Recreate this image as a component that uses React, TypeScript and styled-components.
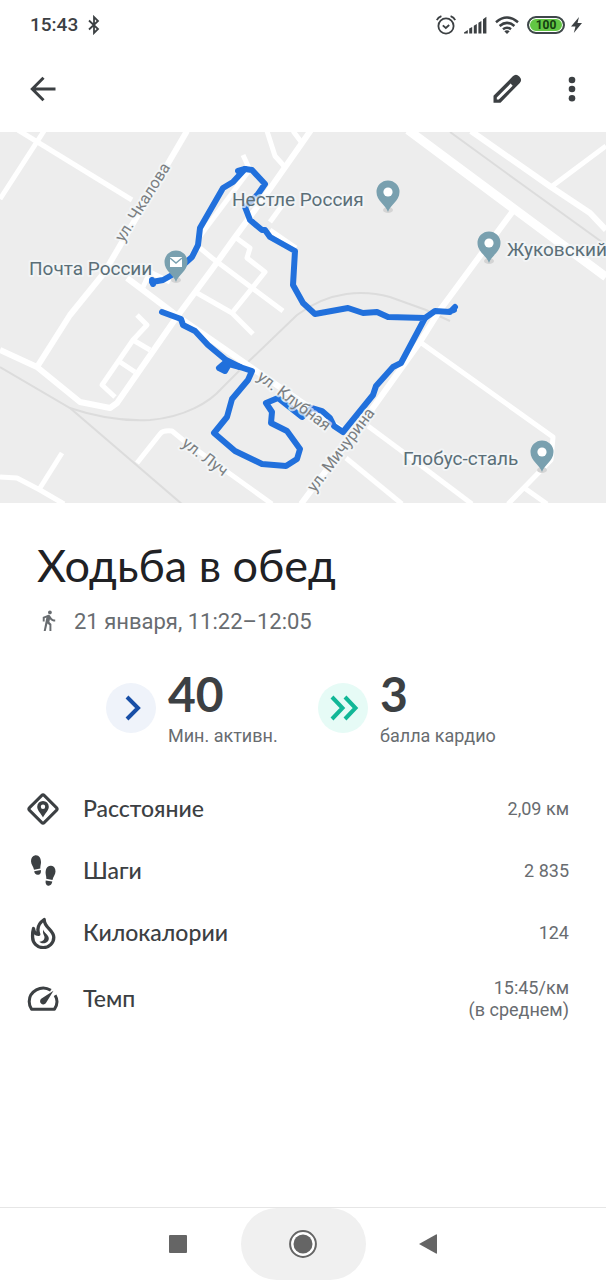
import React from "react";
import styled, { createGlobalStyle } from "styled-components";

const GlobalStyle = createGlobalStyle`
  *, *::before, *::after { box-sizing: border-box; }
  body {
    margin: 0;
    background: #fff;
    color: #3c4043;
    font-family: Roboto, "Noto Sans", sans-serif;
  }
  button {
    border: 0;
    padding: 0;
    background: none;
    color: inherit;
    cursor: pointer;
  }
  svg { display: block; }
`;

const Screen = styled.div`
  display: flex;
  flex-direction: column;
  min-height: 100vh;
  overflow-x: hidden;
`;

const StatusBar = styled.div`
  display: flex;
  align-items: center;
  justify-content: space-between;
  height: 50px;
  padding: 0 24px 0 30px;
`;

const StatusGroup = styled.div<{ $gap: number }>`
  display: flex;
  align-items: center;
  gap: ${(p) => p.$gap}px;
`;

const Clock = styled.time`
  font-size: 19px;
  font-weight: 500;
  line-height: 24px;
`;

const Battery = styled.span`
  display: flex;
  align-items: center;
  justify-content: center;
  width: 38px;
  height: 18px;
  border: 2px solid #3f464b;
  border-radius: 9px;
  background: #62c644;
  box-shadow: inset 0 0 0 1px #fff;
  color: #143d10;
  font-size: 12px;
  font-weight: 700;
  line-height: 14px;
`;

const AppBar = styled.header`
  display: flex;
  align-items: center;
  justify-content: space-between;
  height: 82px;
  padding: 0 10px 4px 19px;
`;

const Actions = styled.div`
  display: flex;
  gap: 17px;
`;

const IconButton = styled.button`
  display: grid;
  place-items: center;
  width: 48px;
  height: 48px;
`;

const MapView = styled.svg`
  width: 100%;
  height: auto;
  background: #ededed;
`;

const PlaceLabel = styled.text`
  font: 400 19px Roboto, "Noto Sans", sans-serif;
  fill: #5b6f78;
  stroke: rgba(245, 248, 250, 0.7);
  stroke-width: 4px;
  stroke-linejoin: round;
  paint-order: stroke;
`;

const StreetLabel = styled(PlaceLabel)`
  font-size: 16px;
  fill: #7b7f82;
  text-anchor: middle;
`;

const Heading = styled.section`
  display: flex;
  flex-direction: column;
  gap: 14px;
  padding: 35px 37px 0;
`;

const Title = styled.h1`
  margin: 0;
  color: #202124;
  font: 400 45px/54px Lato, "Noto Sans", sans-serif;
`;

const Subtitle = styled.p`
  display: flex;
  align-items: center;
  gap: 14px;
  margin: 0;
  color: #686c70;
  font-size: 22px;
  line-height: 32px;
`;

const Stats = styled.section`
  display: grid;
  grid-template-columns: 1fr 1fr;
  padding: 30px 76px 30px 106px;
`;

const Stat = styled.div`
  display: flex;
  align-items: center;
  gap: 12px;
`;

const Badge = styled.span<{ $bg: string; $fg: string }>`
  flex: none;
  width: 50px;
  height: 50px;
  border-radius: 50%;
  background: ${(p) => p.$bg};
  color: ${(p) => p.$fg};
`;

const StatText = styled.div`
  display: flex;
  flex-direction: column;
  gap: 4px;
  white-space: nowrap;
`;

const StatValue = styled.strong`
  font: 700 48px/52px Lato, "Noto Sans", sans-serif;
`;

const StatLabel = styled.span`
  color: #686c70;
  font-size: 18px;
  line-height: 24px;
`;

const Metrics = styled.dl`
  margin: 0;
`;

const Metric = styled.div`
  display: flex;
  align-items: center;
  gap: 24px;
  min-height: 62px;
  padding: 13px 37px 13px 27px;
`;

const MetricName = styled.dt`
  flex: 1;
  padding-bottom: 2px;
  font: 500 23px/28px Lato, "Noto Sans", sans-serif;
`;

const MetricValue = styled.dd`
  margin: 0;
  color: #686c70;
  font-size: 18px;
  line-height: 22px;
  text-align: right;
  white-space: pre-line;
`;

const NavBar = styled.nav`
  display: flex;
  justify-content: center;
  margin-top: auto;
  border-top: 1px solid #e6e6e6;
  color: #656565;
`;

const NavButton = styled.button<{ $active?: boolean }>`
  display: grid;
  place-items: center;
  width: 125px;
  height: 72px;
  border-radius: 36px;
  background: ${(p) => (p.$active ? "#f0f0f0" : "transparent")};
`;

const BluetoothIcon = () => (
  <svg width="12" height="20" viewBox="0 0 12 20" fill="none" stroke="currentColor" strokeWidth="1.800">
    <path d="M1 5.500 10 14 6 18V2l4 4-9 8.500" />
  </svg>
);

const AlarmIcon = () => (
  <svg width="20" height="20" viewBox="0 0 20 20" fill="none" stroke="currentColor" strokeWidth="1.800">
    <circle cx="10" cy="11" r="7.600" />
    <path d="M6.800 10.300 9.800 13l3.400-3M.8 5.200Q2 2.400 5.400 1.200M19.200 5.200Q18 2.400 14.600 1.200" />
  </svg>
);

const SignalIcon = () => (
  <svg width="23" height="18" viewBox="0 0 23 18" fill="currentColor">
    <path d="M0 17.500V16.500L3.800 14v3.500zM5.200 12.500l3-1.600v6.600h-3zM9.800 9.700l3-1.600v9.400h-3zM14.400 6.700l3-1.700v12.500h-3zM19 3.200l3.400-2.400v16.700H19z" />
  </svg>
);

const WifiIcon = () => (
  <svg width="24" height="18" viewBox="0 0 24 18" fill="none" stroke="currentColor" strokeWidth="2.500">
    <path d="M1 6.200Q12-3.200 23 6.200M4.600 10Q12 3.700 19.400 10M8 13.300q4-3.200 8 0" />
    <path d="M9.300 15.300q2.700-2 5.400 0L12 18z" fill="currentColor" stroke="none" />
  </svg>
);

const BoltIcon = () => (
  <svg width="11" height="16" viewBox="0 0 11 16" fill="currentColor">
    <path d="M8 0 0 9.500h4.500L2.800 16 11 6H6.500z" />
  </svg>
);

const BackArrowIcon = () => (
  <svg width="28" height="28" viewBox="0 0 28 28" fill="none" stroke="currentColor" strokeWidth="3">
    <path d="M26.500 14H4M14.500 2.800 3.300 14l11.200 11.200" />
  </svg>
);

const PencilIcon = () => (
  <svg width="30" height="30" viewBox="0 0 30 30" fill="currentColor" fillRule="evenodd">
    <path d="M1.500 28.700V21.800L20.800 2.300Q24-.8 27.300 2.400T27.800 8.900L8.500 28.700ZM4.800 25.600H6.800L20.700 11.700 18.600 9.600 4.800 23.500Z" />
  </svg>
);

const MoreIcon = () => (
  <svg width="8" height="26" viewBox="0 0 8 26" fill="currentColor">
    <circle cx="4" cy="4" r="3.300" />
    <circle cx="4" cy="13" r="3.300" />
    <circle cx="4" cy="22.300" r="3.300" />
  </svg>
);

const WalkIcon = () => (
  <svg width="23" height="24" viewBox="0 1 24 25" fill="currentColor">
    <path d="M13.500 5.500c1.100 0 2-.9 2-2s-.9-2-2-2-2 .9-2 2 .9 2 2 2zM9.800 8.900 7 23h2.100l1.800-8 2.100 2v6h2v-7.500l-2.100-2 .6-3C14.800 12 16.800 13 19 13v-2c-1.900 0-3.500-1-4.300-2.400l-1-1.600c-.4-.6-1-1-1.700-1-.3 0-.5.1-.8.1L6 8.300V13h2V9.600l1.800-.7" />
  </svg>
);

const ChevronIcon = ({ double }: { double?: boolean }) => (
  <svg width="50" height="50" viewBox="0 0 50 50" fill="none" stroke="currentColor" strokeWidth="4">
    <path d={double ? "M14 14 24.500 25 14 36M27 14 37.500 25 27 36" : "M21 14 32 25 21 36"} />
  </svg>
);

const DistanceIcon = () => (
  <svg width="32" height="32" viewBox="0 0 32 32" fill="none">
    <rect x="5.500" y="5.500" width="21" height="21" rx="2" transform="rotate(45 16 16)" stroke="currentColor" strokeWidth="3" />
    <path
      fill="currentColor"
      fillRule="evenodd"
      d="M16 24.500C14.500 21 10.200 17.500 10.200 13.700a5.800 5.800 0 0 1 11.600 0C21.800 17.500 17.500 21 16 24.500ZM16 11.500a2.200 2.200 0 1 0 0 4.400 2.200 2.200 0 0 0 0-4.400Z"
    />
  </svg>
);

const StepsIcon = () => (
  <svg width="32" height="32" viewBox="0 0 32 32" fill="currentColor">
    <path d="M8.300.2C12.500-.3 14.500 4 13.900 8.500c-.3 2-.8 3.600-.5 5L7 14.700C6.500 11.500 4 9.700 4 6.200 4 3 5.500.6 8.300.2ZM7.200 16.300l6.600-1.200c.6 2.800-.6 4.300-2.400 4.700-2.300.4-3.900-1-4.200-3.500Z" />
    <path d="M24.200 10.700c-4.200-.5-6 3.800-5.500 8.300.3 2 .8 3.300.5 4.700l6.300 1.200c.5-3.200 3-5 3-8.500 0-3.200-1.500-5.300-4.300-5.700ZM25.300 26.600l-6.600-1.200c-.6 2.800.6 4.900 2.400 5.300 2.300.4 3.900-1.600 4.200-4.100Z" />
  </svg>
);

const FlameIcon = () => (
  <svg width="32" height="32" viewBox="0 0 32 32" fill="none" stroke="currentColor" strokeWidth="3.300" strokeLinejoin="round">
    <path d="M17.200 2.500C17 10.500 26.800 13 26.800 20.300a10.500 10.200 0 0 1-21.200 0C5.500 17 5.600 14.300 6.500 11.500 7 15 9 17.500 11.800 17.300 9.300 10.500 12 6 17.200 2.500Z" />
    <path
      d="M16.500 12.500c0 3.600 5.300 5 5.300 9 0 3-2.600 4.800-5.600 4.800-1.800 0-3.200-.6-4-1.500 3.300.2 5.800-2 5.200-5.200-.3-1.800-2.300-3.700-.9-7.100Z"
      fill="currentColor"
      stroke="none"
    />
  </svg>
);

const PaceIcon = () => (
  <svg width="32" height="32" viewBox="0 0 32 32" fill="none" stroke="currentColor" strokeWidth="3" strokeLinejoin="round">
    <path d="M23.800 7.200C14 1.200 2.200 8.500 2.200 18.500c0 3 .6 5.300 2.300 7.700h23c2.900-4.300 3-9.800.6-14" />
    <path d="M26.500 7.700 18.800 20.200a3.200 3.200 0 1 1-4.600-4.400Z" fill="currentColor" stroke="none" />
  </svg>
);

const RecentsIcon = () => (
  <svg width="18" height="18" viewBox="0 0 18 18" fill="currentColor">
    <rect width="18" height="18" rx="1" />
  </svg>
);

const HomeIcon = () => (
  <svg width="28" height="28" viewBox="0 0 28 28" fill="currentColor">
    <circle cx="14" cy="14" r="12.900" fill="#fff" stroke="currentColor" strokeWidth="2" />
    <circle cx="14" cy="14" r="9.500" />
  </svg>
);

const BackTriangleIcon = () => (
  <svg width="18" height="20" viewBox="0 0 18 20" fill="currentColor">
    <path d="M0 10 17 .5Q18 0 18 1v18q0 1-1 .500z" />
  </svg>
);

const railways = [
  "M0 367 70 408C105 420 130 421 150 420C185 417 210 402 222 388L247 363 297 315C330 290 365 290 390 297L426 310 450 321",
  "M70 408 183 505",
  "M450 132 516 180 606 245",
];

const roads: { width: number; d: string[] }[] = [
  { width: 9, d: ["M408 130 513 208 606 277"] },
  {
    width: 6,
    d: [
      "M187 131 104 273 70 315 37 367",
      "M0 350 37 367 80 402 110 408 117 403 176 318 213 268 233 240 260 203 302 143 311 130",
      "M513 211 440 310 420 342 370 412 301 504",
      "M127 278 180 318 252 368 345 432",
      "M471 131 551 187 590 213 606 230",
    ],
  },
  {
    width: 5,
    d: [
      "M18 130 132 200",
      "M44 131 0 199",
      "M143 287 150 272 170 282",
      "M267 131 275 156 284 166",
      "M293 131 302 143",
      "M243 155 249 168",
      "M248 172 200 236",
      "M200 248 212 258 283 311",
      "M235 237 250 248 247 258 265 272 232 313",
      "M197 293 232 313 253 334",
      "M270 222 286 200",
      "M270 230 296 248",
      "M137 315 147 325 133 340 102 385 115 397",
      "M133 340 150 350",
      "M120 362 135 372",
      "M606 146 551 187",
      "M420 342 553 437 551 460 508 504",
      "M523 487 547 504",
      "M346 458 402 504",
      "M368 426 403 452 472 504",
      "M137 463 160 434Q163 430 172 431L183 440 272 504",
      "M0 477 17 478 40 490 64 504",
      "M40 488 62 453",
    ],
  },
];

const route =
  "M162 312 181 319 183 325 195 331 208 345 226 360 240 367 252 371 248 380 232 399 227 417 214 433 235 451 262 464 286 466 297 459 300 449 287 431 271 423 272 412 266 403 278 398 302 417 312 408 322 411 330 418 334 426 343 432 373 395 376 386 393 367 401 363 425 318 388 317 377 312 363 313 348 308 315 314 303 303 293 285 295 251 270 237 265 230 262 230 250 220 245 207 258 194 265 184 252 170 245 169 233 182 223 188 200 228 198 245 192 257 172 275 163 280 152 282";

const Pin = ({ x, y, mail }: { x: number; y: number; mail?: boolean }) => (
  <g transform={`translate(${x} ${y})`}>
    <ellipse cy="18" rx="5" ry="3" fill="#d4d4d4" />
    <path d="M0 20C-2 13-11.500 9-11.500 0A11.500 11.500 0 0 1 11.500 0C11.500 9 2 13 0 20Z" fill="#79a0af" />
    {mail ? (
      <g>
        <rect x="-6" y="-5" width="12" height="10" fill="#fff" />
        <path d="M-6-4 0 1 6-4" fill="none" stroke="#79a0af" strokeWidth="1.500" />
      </g>
    ) : (
      <circle r="4.600" fill="#fff" />
    )}
  </g>
);

const RouteMap = () => (
  <MapView viewBox="0 132 606 371" role="img" aria-label="Маршрут прогулки">
    <g fill="none" stroke="#dcdcdc" strokeWidth="2">
      {railways.map((d) => (
        <path key={d} d={d} />
      ))}
    </g>
    {roads.map((group) => (
      <g key={group.width} fill="none" stroke="#fff" strokeWidth={group.width} strokeLinejoin="round">
        {group.d.map((d) => (
          <path key={d} d={d} />
        ))}
      </g>
    ))}
    <g fill="none" stroke="#2170dc" strokeWidth="6" strokeLinecap="round" strokeLinejoin="round">
      <path d={route} />
      <path d="M425 318 435 311 450 312 455 307M448 312 454 310M152 280 153 284M238 171 245 169" />
      <path d="M226 362 219 368 225 371 229 364 240 367" fill="#2170dc" />
    </g>
    <Pin x={388} y={192} />
    <Pin x={489} y={243} />
    <Pin x={542} y={452} />
    <Pin x={176} y={262} mail />
    <PlaceLabel x="232" y="206">Нестле Россия</PlaceLabel>
    <PlaceLabel x="507" y="256">Жуковский</PlaceLabel>
    <PlaceLabel x="29" y="275">Почта России</PlaceLabel>
    <PlaceLabel x="403" y="465">Глобус-сталь</PlaceLabel>
    <StreetLabel transform="translate(147 205) rotate(-58)">ул. Чкалова</StreetLabel>
    <StreetLabel transform="translate(291 405) rotate(37)">ул. Клубная</StreetLabel>
    <StreetLabel transform="translate(345 453) rotate(-53)">ул. Мичурина</StreetLabel>
    <StreetLabel transform="translate(202 461) rotate(37)">ул. Луч</StreetLabel>
  </MapView>
);

const metrics = [
  { name: "Расстояние", value: "2,09 км", Icon: DistanceIcon },
  { name: "Шаги", value: "2 835", Icon: StepsIcon },
  { name: "Килокалории", value: "124", Icon: FlameIcon },
  { name: "Темп", value: "15:45/км\n(в среднем)", Icon: PaceIcon },
];

export default function App() {
  return (
    <Screen>
      <GlobalStyle />
      <StatusBar>
        <StatusGroup $gap={10}>
          <Clock>15:43</Clock>
          <BluetoothIcon />
        </StatusGroup>
        <StatusGroup $gap={8}>
          <AlarmIcon />
          <SignalIcon />
          <WifiIcon />
          <StatusGroup $gap={6}>
            <Battery>100</Battery>
            <BoltIcon />
          </StatusGroup>
        </StatusGroup>
      </StatusBar>
      <AppBar>
        <IconButton aria-label="Назад">
          <BackArrowIcon />
        </IconButton>
        <Actions>
          <IconButton aria-label="Изменить">
            <PencilIcon />
          </IconButton>
          <IconButton aria-label="Ещё">
            <MoreIcon />
          </IconButton>
        </Actions>
      </AppBar>
      <RouteMap />
      <Heading>
        <Title>Ходьба в обед</Title>
        <Subtitle>
          <WalkIcon />
          21 января, 11:22–12:05
        </Subtitle>
      </Heading>
      <Stats>
        <Stat>
          <Badge $bg="#eff3fa" $fg="#174ea6">
            <ChevronIcon />
          </Badge>
          <StatText>
            <StatValue>40</StatValue>
            <StatLabel>Мин. активн.</StatLabel>
          </StatText>
        </Stat>
        <Stat>
          <Badge $bg="#e6fbf6" $fg="#12b797">
            <ChevronIcon double />
          </Badge>
          <StatText>
            <StatValue>3</StatValue>
            <StatLabel>балла кардио</StatLabel>
          </StatText>
        </Stat>
      </Stats>
      <Metrics>
        {metrics.map(({ name, value, Icon }) => (
          <Metric key={name}>
            <Icon />
            <MetricName>{name}</MetricName>
            <MetricValue>{value}</MetricValue>
          </Metric>
        ))}
      </Metrics>
      <NavBar>
        <NavButton aria-label="Недавние приложения">
          <RecentsIcon />
        </NavButton>
        <NavButton $active aria-label="Главный экран">
          <HomeIcon />
        </NavButton>
        <NavButton aria-label="Назад">
          <BackTriangleIcon />
        </NavButton>
      </NavBar>
    </Screen>
  );
}
